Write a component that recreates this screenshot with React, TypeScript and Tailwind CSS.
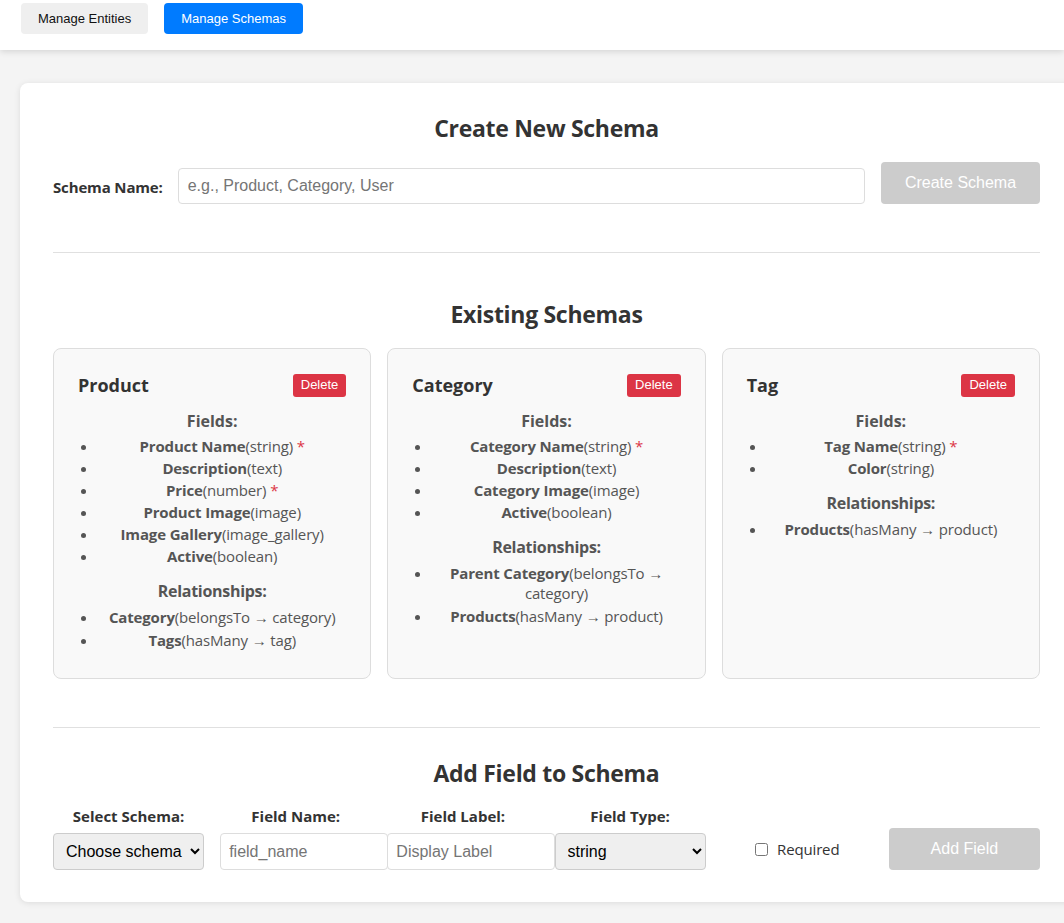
import React from "react";

type Field = { name: string; type: string; req?: boolean };
type Rel = { name: string; kind: string; target: string };
type Schema = { title: string; fields: Field[]; rels: Rel[] };

const schemas: Schema[] = [
  {
    title: "Product",
    fields: [
      { name: "Product Name", type: "string", req: true },
      { name: "Description", type: "text" },
      { name: "Price", type: "number", req: true },
      { name: "Product Image", type: "image" },
      { name: "Image Gallery", type: "image_gallery" },
      { name: "Active", type: "boolean" },
    ],
    rels: [
      { name: "Category", kind: "belongsTo", target: "category" },
      { name: "Tags", kind: "hasMany", target: "tag" },
    ],
  },
  {
    title: "Category",
    fields: [
      { name: "Category Name", type: "string", req: true },
      { name: "Description", type: "text" },
      { name: "Category Image", type: "image" },
      { name: "Active", type: "boolean" },
    ],
    rels: [
      { name: "Parent Category", kind: "belongsTo", target: "category" },
      { name: "Products", kind: "hasMany", target: "product" },
    ],
  },
  {
    title: "Tag",
    fields: [
      { name: "Tag Name", type: "string", req: true },
      { name: "Color", type: "string" },
    ],
    rels: [{ name: "Products", kind: "hasMany", target: "product" }],
  },
];

const UI = "font-['Open_Sans',sans-serif]";
const ARIAL = "font-['Liberation_Sans',Arial,sans-serif]";

function SchemaCard({ s }: { s: Schema }) {
  return (
    <div className="bg-[#f9f9f9] border border-[#dddddd] rounded-[8px] px-6 pt-6 pb-[25px]">
      <div className="flex items-center justify-between h-6">
        <h3 className="text-[18px] font-bold text-[#333333] leading-6">{s.title}</h3>
        <button className={`${ARIAL} bg-[#dc3545] text-white text-[13px] h-[23px] px-2 rounded-[3px]`}>
          Delete
        </button>
      </div>
      <h4 className="mt-[13px] text-center text-[16px] font-bold text-[#555555] leading-[22px]">Fields:</h4>
      <ul className="mt-[4px] list-disc pl-5 text-[#555555] text-[15px] tracking-[-0.15px]">
        {s.fields.map((f, i) => (
          <li key={i} className="text-center leading-[20px] mb-[2px]">
            <span className="font-bold">{f.name}</span>({f.type}){f.req && <span className="text-[#dc3545]"> *</span>}
          </li>
        ))}
      </ul>
      <h4 className="mt-[14px] text-center text-[16px] font-bold text-[#555555] leading-[22px] tracking-[-0.3px]">
        Relationships:
      </h4>
      <ul className="mt-[5px] list-disc pl-5 text-[#555555] text-[15px] tracking-[-0.15px]">
        {s.rels.map((r, i) => (
          <li key={i} className="text-center leading-[20px] mb-[3px]">
            <span className="font-bold">{r.name}</span>({r.kind} → {r.target})
          </li>
        ))}
      </ul>
    </div>
  );
}

export default function App() {
  return (
    <div className={`${UI} min-h-[923px] bg-[#f4f4f4] overflow-hidden`}>
      <header className="bg-white h-[50px] shadow-[0_2px_6px_rgba(0,0,0,0.12)] flex items-start gap-4 pl-[21px] pt-[3px] relative z-10">
        <button className={`${ARIAL} bg-[#efefef] text-[#111] text-[13px] h-[31px] px-[17px] rounded-[4px]`}>
          Manage Entities
        </button>
        <button className={`${ARIAL} bg-[#007bff] text-white text-[13px] h-[31px] px-[17px] rounded-[4px]`}>
          Manage Schemas
        </button>
      </header>
      <main className="pt-[33px] pl-5">
        <div className="w-[1053px] bg-white rounded-[8px] shadow-[0_1px_6px_rgba(0,0,0,0.1)] px-[33px] pt-[31px] pb-[32px]">
          <h2 className="text-center text-[23px] font-bold text-[#333333] leading-[29px] tracking-[-0.3px]">
            Create New Schema
          </h2>
          <div className="mt-[19px] flex items-end">
            <label className="text-[15px] font-bold text-[#333333] leading-[20px] mb-[7px] mr-[15px] tracking-[-0.15px]">
              Schema Name:
            </label>
            <input
              className={`${ARIAL} flex-1 h-9 border border-[#dddddd] rounded-[4px] px-[9px] text-[16px] placeholder:text-[#757575] outline-none`}
              placeholder="e.g., Product, Category, User"
            />
            <button className={`${ARIAL} ml-4 w-[159px] h-[42px] bg-[#cccccc] text-white text-[16px] rounded-[4px]`}>
              Create Schema
            </button>
          </div>
          <div className="mt-[48px] border-t border-[#e0e0e0]" />
          <h2 className="mt-[47px] text-center text-[23px] font-bold text-[#333333] leading-[29px] tracking-[-0.3px]">
            Existing Schemas
          </h2>
          <div className="mt-[19px] grid grid-cols-3 gap-4">
            {schemas.map((s) => (
              <SchemaCard key={s.title} s={s} />
            ))}
          </div>
          <div className="mt-[48px] border-t border-[#e0e0e0]" />
          <h2 className="mt-[31px] text-center text-[23px] font-bold text-[#333333] leading-[29px] tracking-[-0.3px]">
            Add Field to Schema
          </h2>
          <div className="mt-[17px] grid grid-cols-6 gap-4 items-end">
            <div className="flex flex-col items-center">
              <label className="text-[15px] font-bold text-[#333333] leading-[22px] mb-[6px]">Select Schema:</label>
              <select className={`${ARIAL} w-full h-[37px] bg-[#efefef] border border-[#cccccc] rounded-[4px] pl-2 text-[16px] text-black`}>
                <option>Choose schema</option>
              </select>
            </div>
            <div className="flex flex-col items-center">
              <label className="text-[15px] font-bold text-[#333333] leading-[22px] mb-[6px]">Field Name:</label>
              <input
                className={`${ARIAL} self-stretch w-[168px] h-[37px] bg-white border border-[#dddddd] rounded-[4px] px-2 text-[16px] placeholder:text-[#757575] outline-none`}
                placeholder="field_name"
              />
            </div>
            <div className="flex flex-col items-center">
              <label className="text-[15px] font-bold text-[#333333] leading-[22px] mb-[6px]">Field Label:</label>
              <input
                className={`${ARIAL} self-stretch w-[168px] h-[37px] bg-white border border-[#dddddd] rounded-[4px] px-2 text-[16px] placeholder:text-[#757575] outline-none`}
                placeholder="Display Label"
              />
            </div>
            <div className="flex flex-col items-center">
              <label className="text-[15px] font-bold text-[#333333] leading-[22px] mb-[6px]">Field Type:</label>
              <select className={`${ARIAL} w-full h-[37px] bg-[#efefef] border border-[#cccccc] rounded-[4px] pl-2 text-[16px] text-black`}>
                <option>string</option>
              </select>
            </div>
            <div className="flex items-center justify-center h-[42px]">
              <label className="flex items-center gap-[9px] text-[15px] tracking-[-0.15px] text-[#333333]">
                <input type="checkbox" className="w-[13px] h-[13px]" />
                Required
              </label>
            </div>
            <div>
              <button className={`${ARIAL} w-full h-[42px] bg-[#cccccc] text-white text-[16px] rounded-[4px]`}>
                Add Field
              </button>
            </div>
          </div>
        </div>
      </main>
    </div>
  );
}
